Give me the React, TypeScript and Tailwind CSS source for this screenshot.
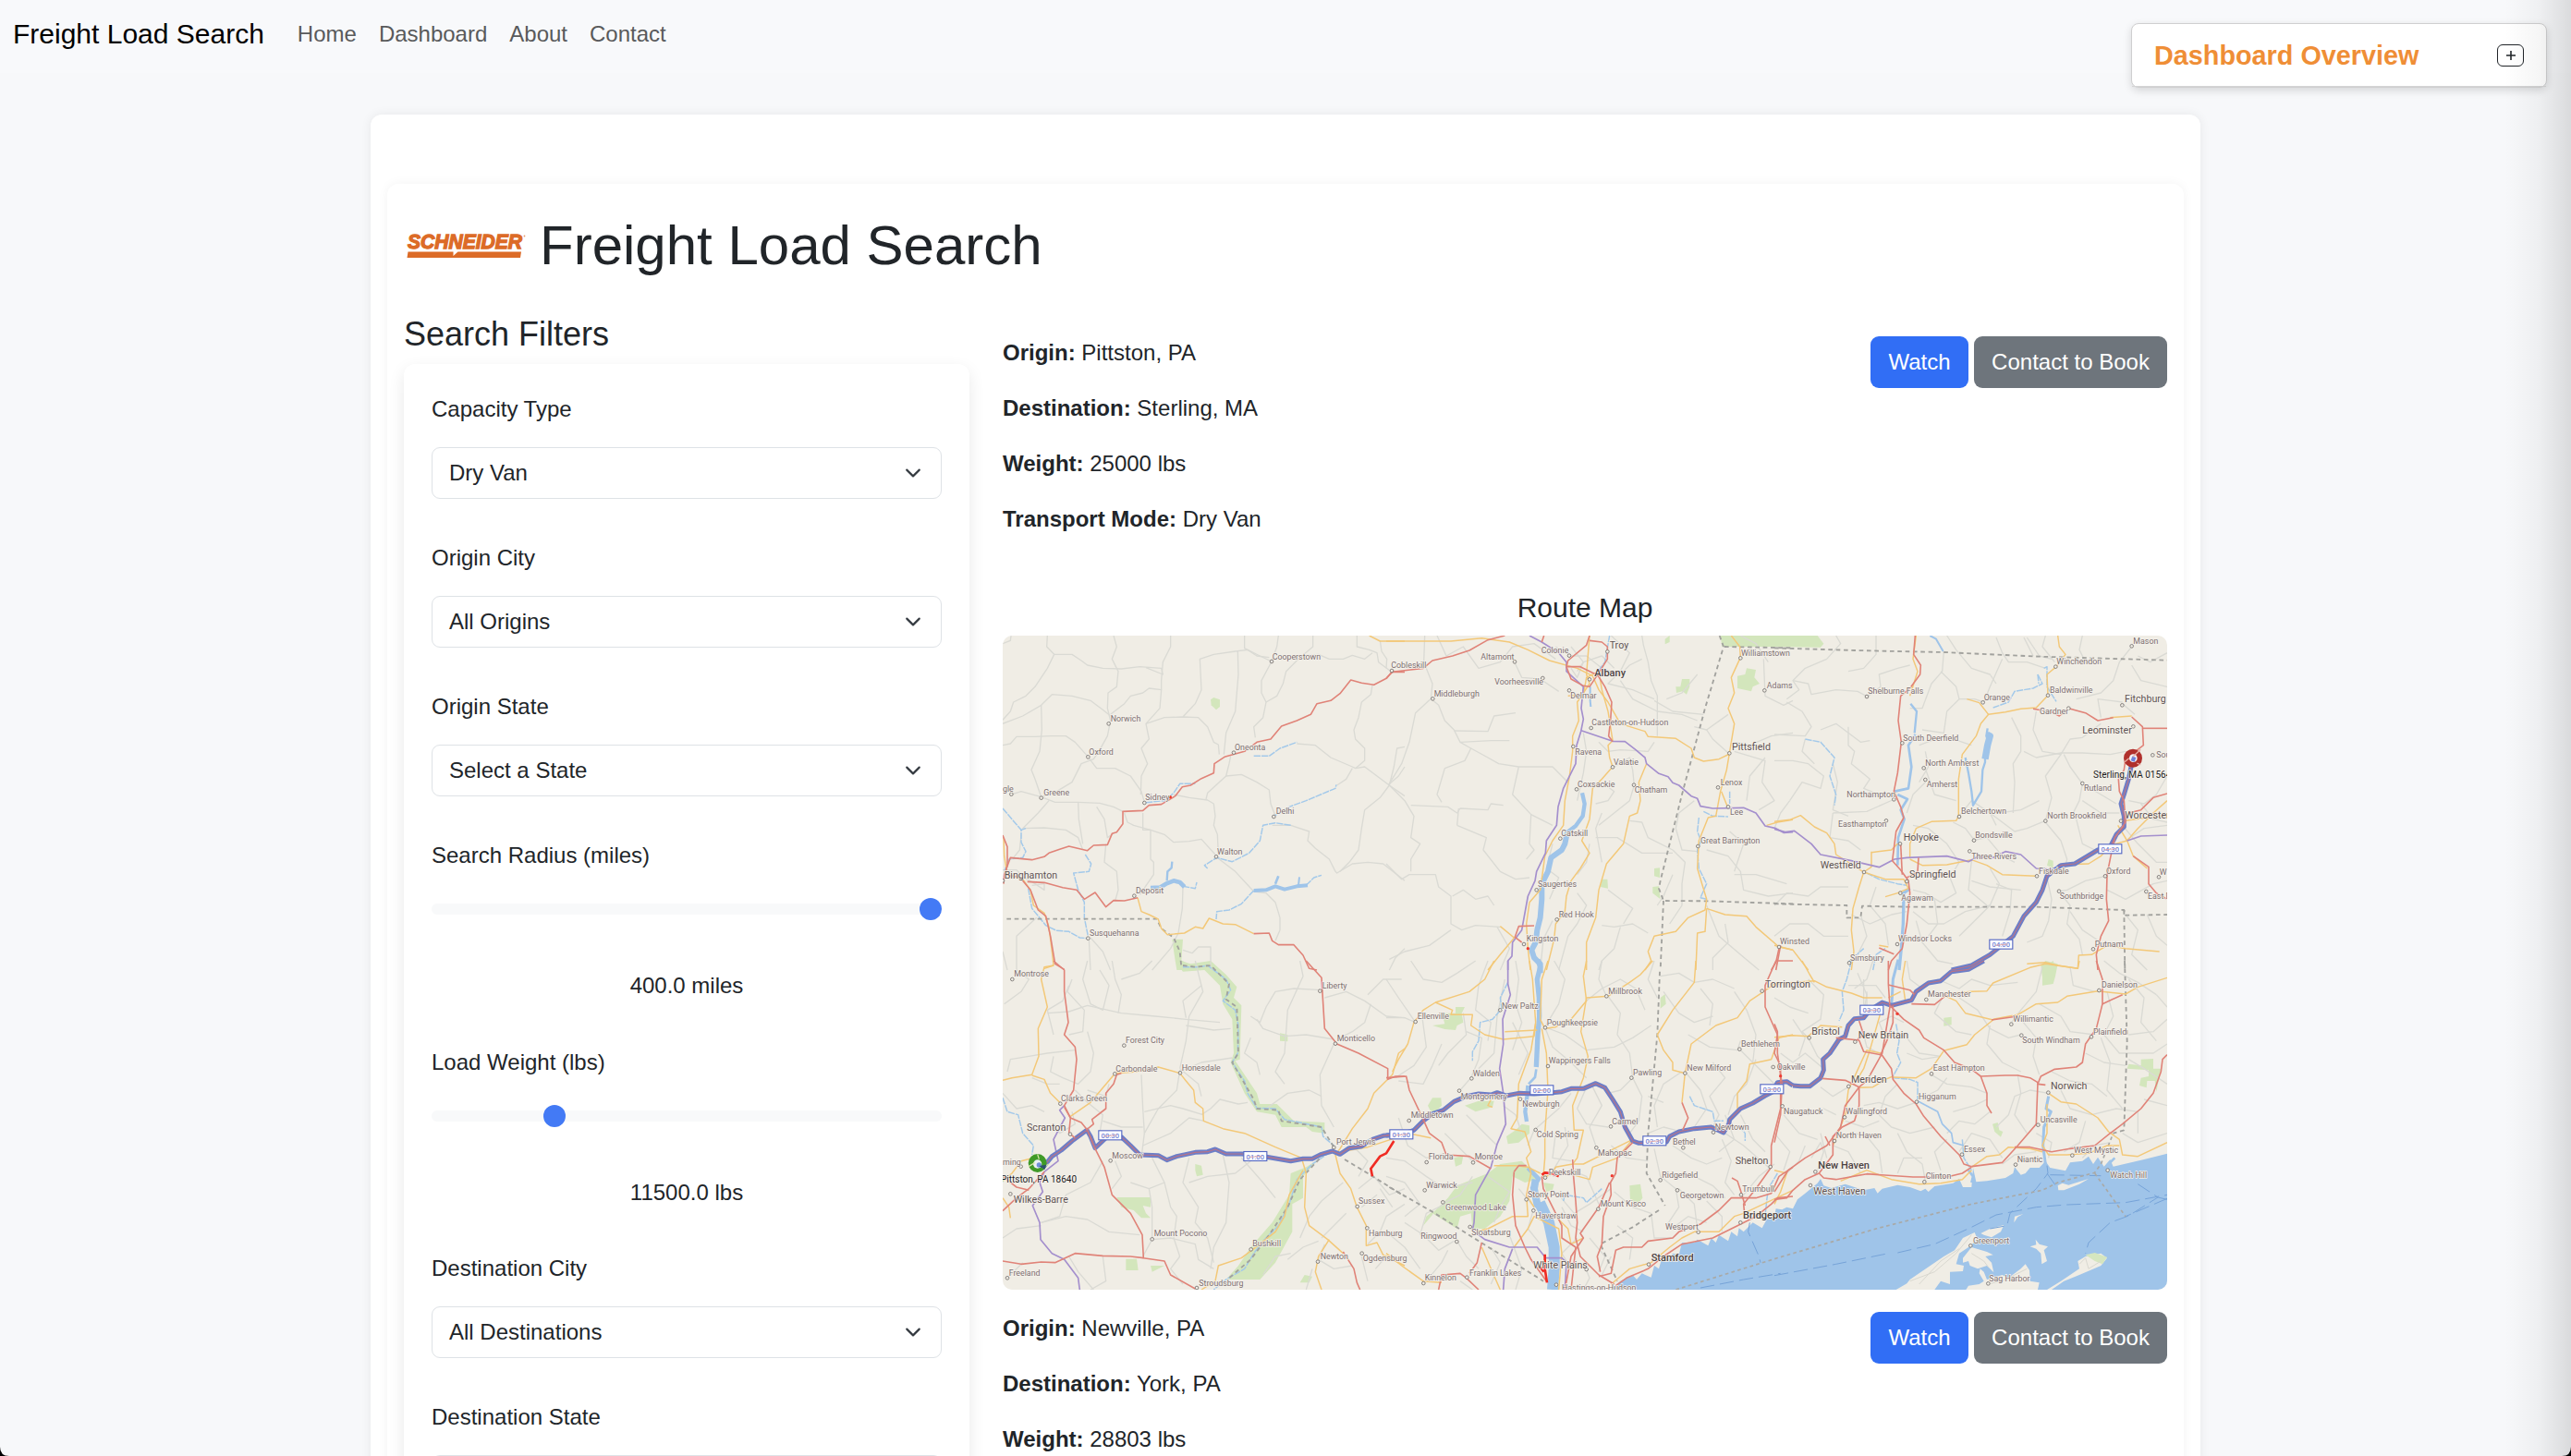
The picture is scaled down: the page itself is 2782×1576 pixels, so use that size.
import React from "react";

type Label = [string, number, number, number, number, number?];
type Tile = {
  x: number;
  y: number;
  minor?: string[];
  yellow?: string[];
  red?: string[];
  purple?: string[];
  stream?: string[];
  river?: [string, number][];
  parks?: string[];
  border?: string[];
  route?: string;
  times?: [string, number, number][];
  jams?: string[];
  labels: Label[];
};

// Map geometry is kept in six sectors; each one has its own local origin.
const tiles: Tile[] = [
  {
    x: -15,
    y: -24,
    minor: [
      "15,50 40,40 42,24", "160,24 158,60 182,85 160,130 120,190 90,220 50,240 40,270 15,298",
      "182,85 240,85 270,105 290,120 340,130 400,132 460,125 530,130 535,150 480,128", "375,24 385,60 370,100 390,140 385,190 357,210 355,260 365,300 355,350 330,395 310,425 270,440 240,500 190,530 140,548",
      "15,310 80,285 140,250 175,215 240,220 300,235 340,265 365,285", "365,280 410,245 430,220 470,210 490,195 530,200 530,170 535,110 560,60 560,24",
      "15,380 40,375 60,352 120,352 170,350 220,350 250,370 290,415 320,455 380,455 430,480 465,530 475,565", "140,250 142,330 135,400 108,460 120,490 140,548 75,530 43,540",
      "140,548 185,565 260,565 330,568 375,580 405,595", "530,200 525,260 480,310 490,360 465,390 485,440 465,480 463,540",
      "480,310 540,290 600,288 650,290 680,320 700,370 715,378 718,410", "600,288 640,245 660,200 655,100 700,85 770,75 810,70 840,90 880,95",
      "800,24 800,65 850,90 888,108 855,170 855,210 870,240 860,290 830,320 835,355", "778,75 780,150 770,270 740,340 733,410",
      "910,24 905,60 888,108", "1022,24 1022,60 975,100 935,140 925,180 905,220 870,240", "975,90 1040,85 1075,100 1120,100 1150,88 1190,100 1215,80",
      "1165,24 1165,60 1205,70 1230,80 1235,110 1275,140", "1240,40 1245,75 1262,100 1260,130", "1215,185 1210,215 1180,240 1170,290 1155,330 1160,360 1190,390 1190,430 1160,455",
      "570,540 620,550 680,558 700,570 705,610 700,640 712,670 715,735", "410,600 420,630 440,640 495,655 540,670 570,695 620,692 660,685 705,735",
      "470,600 470,655 495,655 495,750 505,760 505,800 460,865", "675,555 680,535 740,480 790,475 840,500 880,525 885,570 900,610",
      "740,480 750,440 755,415", "890,640 950,640 1010,660 1005,690 1030,715 1075,750 1095,790 1100,795 1150,765 1200,760 1250,765 1320,820",
      "970,375 1030,380 1080,420 1150,450 1160,455 1190,450 1230,480 1270,510 1240,550 1190,590 1180,650 1170,720 1140,760 1110,790",
      "1150,455 1130,490 1100,510", "1320,385 1295,390 1285,450 1270,510 1320,545", "705,740 770,790 830,855 870,860 900,890 915,940 915,980 900,1015",
      "600,840 598,910 585,990 560,1040 500,1110", "165,560 130,600 80,650 150,648 220,655 260,680 275,720", "75,670 70,720 50,745",
      "260,565 262,620 275,700", "350,700 345,760 385,790 390,850 380,885", "320,580 345,620 355,680 375,665",
      "125,940 60,1000 60,1110", "15,1050 30,1110", "295,1010 300,1110", "300,1005 340,1050 365,1110", "15,785 60,785 85,810 120,830 150,850 150,830 110,835",
      "600,1045 630,1055 650,1035 690,1035 690,1110", "1320,1040 1290,1070 1270,1110",
    ],
    yellow: ["1205,24 1240,42 1320,42", "18,680 20,740 30,800 80,815 105,850 115,900 150,925 165,970 175,1050 180,1095 150,1105", "453,875 465,920 490,930 520,945 530,975 550,995 605,990 640,970 665,975 685,942 730,960 770,962 830,992"],
    red: ["1320,142 1278,142 1262,162 1220,184 1180,178 1145,168 1110,212 1080,235 1035,245 1015,280 970,300 920,318 885,360 840,370 800,400 735,418 702,440 700,470 660,488 625,510 598,515 575,545 530,572 490,575 470,592 405,595 405,635 385,662 370,667 355,703 310,705 290,722 230,708 200,718 165,730 150,742 110,752 40,745 20,800 18,830", "15,672 30,710 30,770 22,800 70,808 105,850 130,915 155,935 170,1000 185,1090 215,1108", "95,823 150,826 210,842 255,850 280,880 315,858 350,905 375,884 410,885 453,875", "830,992 880,990 890,1015 910,1028 960,1028 990,1062 1010,1105 1035,1110"],
    stream: ["15,585 45,620 75,655 75,695 90,725 80,745 35,750 20,790", "75,655 90,650", "98,845 110,910 155,965 190,982 230,985 265,1005 292,1007", "283,735 302,765 295,790 245,795 260,850 280,890 280,940 292,1000", "480,566 540,560 570,535 590,505 640,505", "830,415 880,415 915,390 970,370", "895,610 945,580 1000,560 1095,520 1098,508", "950,640 900,632 860,640 850,690 815,730 760,758 710,745 670,770 680,780", "830,852 790,895 750,915 710,920 708,945", "1000,835 1025,810 1050,802", "600,838 640,845 645,825"],
    river: [["495,843 525,842 545,830 570,820 590,825 605,840", 14], ["548,820 550,790 563,778 565,758", 7], ["830,852 870,850 900,838 930,848 970,838 1005,835", 12], ["900,830 910,805", 8], ["975,835 978,808", 6]],
    parks: ["690,232 700,225 720,232 720,255 708,265 692,250", "565,1010 600,1010 595,1080 640,1095 690,1085 720,1110 580,1110 572,1060"],
    border: ["28,944 515,944 530,975 570,1005 590,1050 595,1100"],
    labels: [["Cooperstown", 890, 101, 888, 108], ["Norwich", 365, 302, 359, 310], ["Oxford", 295, 410, 292, 418], ["Greene", 148, 543, 140, 551], ["gle", 15, 532, 43, 539], ["Sidney", 478, 559, 475, 567], ["Oneonta", 768, 397, 765, 404], ["Delhi", 902, 604, 895, 612], ["Walton", 711, 734, 708, 742], ["Deposit", 447, 861, 442, 869], ["Binghamton", 20, 812, 15, 820, 1], ["Susquehanna", 297, 999, 292, 1007]],
  },
  {
    x: 1245,
    y: -24,
    minor: [
      "125,24 122,110 150,180 145,229 95,275 75,370 50,440 8,508", "8,508 60,560 90,610 80,680 110,700 80,750 80,790", "8,508 40,480 60,450", "80,575 200,580 230,600 240,585 330,590 340,570 380,575",
      "145,229 170,250 190,300 220,330 240,370 275,390 255,430 190,455 165,540 180,565", "220,333 330,335 350,285 420,275", "240,370 340,365 400,365", "275,390 330,420 365,440 430,450 540,450 590,500",
      "415,107 440,160 500,165 560,205", "430,450 410,540 470,605 540,640", "470,605 465,700 480,720 455,750", "230,640 325,680 315,720 370,790 420,815 465,810",
      "230,640 235,585", "0,765 50,815 75,800 160,800 170,840 210,870 210,960 245,980 290,965 370,970", "210,980 140,1030 60,1050 10,1075", "215,870 250,850 290,880 330,870 350,900",
      "165,24 195,90 250,60 300,130 370,110 410,60 480,50 550,100", "550,60 600,90 650,90 700,130 760,150 790,120 830,100", "600,130 620,160 640,110 700,90 740,130", "600,60 640,110 620,140",
      "730,24 790,80 760,140 720,180 800,200 870,230", "830,24 835,55 850,110 860,170 880,220 880,350", "760,170 800,230 880,270 960,280 1010,300", "870,235 930,270 1030,280",
      "1010,150 960,210 910,230", "640,340 650,400 640,470 620,560", "690,370 720,400 760,395 850,400 870,370", "740,450 790,420 800,460 805,510 790,560 740,600 690,640", "700,500 740,530 720,560 680,570",
      "680,680 750,680 830,730 930,730", "700,600 680,650 700,760", "790,625 830,630 850,680 930,720", "930,720 970,760 960,830 960,900 920,960", "930,800 900,870 880,900", "720,850 760,880 800,910 770,960",
      "700,965 740,970 800,960 850,990", "1000,560 950,600 940,650 960,720 1010,725", "1040,720 1110,740 1150,790 1160,850 1240,870 1320,860", "1130,800 1200,800 1300,830", "1115,660 1160,700 1130,790",
      "1130,400 1230,430 1220,500 1260,560 1210,590", "1225,100 1230,220 1290,250 1320,235", "1130,370 1180,380 1250,350 1320,340", "1040,330 1060,360 1110,405", "1110,280 1040,330 1000,320",
      "1170,560 1180,480 1230,420", "1150,24 1200,50 1240,110", "540,700 520,780 560,810 530,880", "660,700 650,760 620,800", "540,950 510,1010 500,1110", "620,860 650,900 620,960 590,1000 560,1110", "760,970 740,1040 700,1080 690,1110", "1040,900 1080,1000 1150,1060 1210,1110", "1100,960 1110,1020 1060,1070 1060,1110", "360,970 400,1040 370,1110",
    ],
    yellow: ["0,42 210,42 310,32 400,45 460,70 530,105 620,130 670,155 690,200 720,240 760,310 840,335 850,352 940,358 990,390 1000,420 1030,432 1080,425 1115,408", "660,24 650,150 660,180 620,240 625,300 605,350 605,400 595,480 580,560 575,640 540,690 515,740 500,850 465,890 455,960 460,1040 468,1110", "590,220 640,215 650,160 690,140 700,200 720,270 735,365 720,380 725,420 735,450 700,490 670,520 660,620 635,690 660,730 630,780 600,820 585,870 580,920 550,960 545,1010 520,1110", "845,440 820,500 825,560 815,600 790,610 770,700 715,765 690,850 680,940 650,1020 650,1110", "1120,24 1148,60 1150,95 1120,160 1130,210 1110,260 1130,310 1115,400 1105,460 1085,530 1070,610 1045,615 1015,690 1010,780 1025,830 1040,880 1035,915 980,940 940,985 870,1000 850,1050 860,1080 840,1110", "1088,530 1110,585", "1040,910 1035,985 1010,990 1005,1110", "1040,910 1100,930 1170,935 1200,970 1275,1035 1320,1045", "1320,622 1270,630 1235,640", "370,968 415,1005", "420,1000 370,1060 330,1110"],
    red: ["0,162 20,142 120,130 150,105 215,90 270,72 330,38 370,28 385,24", "512,24 505,45", "660,24 650,55 590,105 585,125 630,125 670,145 685,150", "660,40 700,45 718,60 718,100 690,145 660,190 640,187 600,165 585,125", "685,150 710,190 732,240 728,300 722,350 735,368", "480,966 430,968 418,1003 440,1020", "1275,1040 1265,1085 1250,1110"],
    purple: ["465,24 505,45 560,80 585,110 585,140 640,190 633,260 640,295 632,335 618,380 615,440 575,520 558,580 553,640 520,690 517,730 488,790 483,820 460,870 440,980 410,1020 408,1065 395,1080 395,1110", "633,332 735,367 775,368 810,395 840,420 845,440 885,472 915,482 930,502 950,510 990,545 1010,553 1020,578 1060,585 1160,583 1200,600 1230,642 1265,650 1290,664 1320,662"],
    stream: ["725,24 710,110 680,150", "1115,530 1115,570", "1030,595 1060,610 1110,612", "1015,615 1010,660 1022,690 1010,720 1015,780 1040,830 1020,875 1040,880"],
    river: [["662,190 662,235 664,255", 6], ["636,535 644,570 638,610 615,642 588,662", 13], ["588,662 580,700 570,720 535,745 525,790 505,830 505,880 500,940 490,980 485,1020 472,1045 480,1070 500,1090 500,1120", 18]],
    parks: ["1085,24 1320,24 1320,60 1090,60", "905,35 920,24 920,45 905,52", "940,190 955,190 960,165 985,165 985,190 975,215 962,205 942,210", "1140,155 1165,150 1170,130 1200,135 1195,160 1212,180 1190,190 1185,205 1140,195", "870,780 888,778 888,810 870,805", "865,840 885,838 890,880 865,860", "700,815 718,815 720,845 695,840"],
    border: ["1082,24 1095,60 1035,260 960,540 890,820 885,845 900,885 1040,886 1320,895", "1098,60 1320,64", "900,885 890,1110"],
    labels: [["Cobleskill", 16, 130, 18, 138], ["Altamont", 307, 101, 417, 109], ["Colonie", 503, 80, 594, 89], ["Troy", 725, 66, 718, 76, 1], ["Albany", 676, 157, 660, 166, 2], ["Voorheesville", 352, 184, 508, 162], ["Delmar", 598, 227, 594, 202], ["Middleburgh", 155, 222, 151, 229], ["Castleton-on-Hudson", 667, 316, 665, 324], ["Ravena", 613, 410, 607, 384], ["Valatie", 738, 443, 735, 451], ["Coxsackie", 621, 515, 618, 523], ["Chatham", 806, 534, 804, 509], ["Catskill", 568, 675, 565, 683], ["Saugerties", 492, 841, 488, 850], ["Red Hook", 560, 938, 554, 946], ["Kingston", 455, 1018, 447, 1026], ["Williamstown", 1152, 89, 1150, 97], ["Adams", 1235, 194, 1228, 202], ["Pittsfield", 1122, 396, 1114, 406, 1], ["Lenox", 1085, 509, 1077, 517], ["Lee", 1116, 607, 1110, 580], ["Great Barrington", 1020, 700, 1012, 708]],
  },
  {
    x: 2505,
    y: -24,
    minor: [
      "200,24 215,50 170,100 100,130 60,170 80,200 40,230", "60,170 110,180 120,215 200,200 270,205 302,222 345,190 340,150 400,130 440,120", "330,24 330,85 290,130 240,140", "40,240 90,270 120,320 100,350 0,345", "150,330 200,310 280,370 310,365", "240,320 240,380 260,400 250,440 310,490 290,520 350,545",
      "0,430 60,430 110,440 160,480 150,520 90,500 50,560", "100,360 90,400 130,440", "50,560 20,600 0,650", "190,440 205,500 190,590 240,610", "190,600 300,595 390,555", "190,600 180,680 240,690 280,720",
      "550,75 545,140 510,180 480,260 440,260", "560,24 590,70 640,130 700,150 720,180", "540,140 590,190 600,230 560,270 550,340 480,330", "470,380 550,350 640,380", "720,30 740,80 760,110 820,110 880,130", "820,30 860,90 900,100", "740,100 700,190 680,240",
      "810,30 840,90", "600,230 650,230 680,240", "850,270 840,330 870,400 930,410 960,360 1000,355 1060,310", "770,290 800,350 800,400 775,440 780,500 775,600", "810,400 850,420 930,405 1000,405 1090,410 1140,400", "930,410 880,480 900,550 880,625", "880,625 820,650 780,660 700,600",
      "730,600 800,590 860,560", "490,455 520,540 590,560", "490,500 450,540 430,600", "450,640 500,650 560,700 600,760", "470,500 500,450 490,400", "650,690 620,650 580,630", "640,690 690,680 740,740 780,760", "600,610 640,560 700,600 720,640",
      "600,760 570,810 590,860 540,890 490,860 450,850", "640,755 630,850 690,900", "700,780 730,830 700,900 650,950 600,1000", "450,920 500,960 550,960 620,920 700,900", "460,950 480,1020 530,1080 580,1090", "720,830 770,850 765,920 740,1000", "885,810 900,880 890,950 870,1000 820,1020",
      "920,850 960,900 950,960 990,1010 1000,1060", "1075,805 1010,820 950,850 920,855", "880,630 930,690 950,750 940,790", "980,620 1000,700 1040,720", "1000,505 1060,540 1110,570", "1000,505 990,560 960,620", "1000,505 960,450 940,410", "1120,600 1060,600 1000,560",
      "1130,640 1180,700 1240,760 1275,760", "1140,690 1200,650 1275,640", "1150,560 1200,570 1240,540 1275,480", "1190,570 1230,620 1275,630", "1080,850 1140,880 1230,830 1275,820", "960,920 1000,980 1060,1020", "1140,930 1180,980 1160,1060 1210,1110", "1210,930 1240,1000 1275,1030", "1160,120 1190,170 1275,190", "1160,60 1120,110 1100,170 1060,210 980,230", "1060,290 1050,230 1130,240", "1130,245 1170,280", "0,900 40,860 110,870 150,840 240,840", "0,1000 50,960 110,960 160,1000 240,1000", "250,930 310,960 380,930 430,920", "280,930 300,1000 260,1080", "330,840 310,900 360,960 370,1030",
      "880,24 870,60 910,110", "1000,24 990,70 1010,110", "1275,80 1220,110 1180,90", "640,820 700,840 800,850", "520,880 530,960 500,1000",
    ],
    yellow: ["920,24 925,60 945,85 915,125 885,150 888,218 850,258 800,262 750,272 695,280 670,310 655,350 610,410 598,490 598,610 590,625 510,628 460,650 440,700 440,745", "625,230 665,242 695,280", "0,628 50,622 85,608 130,645 170,665 195,700 200,735 240,760 290,792", "290,792 275,840 255,910 250,980 258,1050 250,1110", "315,725 315,775 290,792 360,815 420,815 435,845 400,860 360,872", "400,700 380,720 315,728", "440,750 480,770 560,768 640,752 690,770 740,800 850,805", "1090,290 1160,285", "1275,560 1230,600 1180,650 1145,690 1090,705 1060,740 1020,765 920,768", "1140,625 1210,615 1275,608", "1145,690 1165,740 1210,780", "1115,640 1145,690", "0,1030 60,1045 110,1110", "820,1090 880,1085 920,1095 985,1105 988,1062 1030,1060 1080,1030 1140,1040 1250,1050", "460,24 450,100 465,140 440,220", "340,1030 370,1035"],
    red: ["457,24 452,85 475,120 473,150 440,195 410,220 402,300 412,370 400,470 388,530 410,580 420,615 395,660 383,755 410,785 435,820 440,860 430,960 415,1040 380,1080 370,1110", "340,1038 388,1058", "840,262 900,272 925,285 955,260 1010,275 1050,300 1100,290", "1160,288 1195,320 1198,380 1140,425 1135,460 1117,490 1120,530 1135,560 1140,630 1105,680 1092,740 1080,800 1078,880 1085,950 1060,1000 1045,1060 1050,1110", "1195,325 1275,325", "1275,537 1230,550 1190,590 1150,600", "1165,740 1215,775 1215,830 1240,860 1275,880", "430,810 465,790 468,745", "20,1030 5,1110", "410,700 415,800"],
    purple: ["0,652 35,662 65,658 120,700 150,735 250,755 340,776 390,750 430,745 560,740 630,758 660,742 710,745 750,725 800,735 850,780 900,783 930,770", "1145,690 1190,675 1275,672"],
    stream: ["875,130 885,125 885,190 915,238", "855,150 870,180 840,195 780,205 760,240 710,258", "855,150 858,180", "100,360 150,370 195,420 180,480 200,540 195,575", "300,795 340,815 400,830 430,835", "240,1085 290,1040", "320,1110 330,1060 360,1040"],
    river: [["505,24 525,35 548,75", 6], ["442,245 462,270 455,340", 7], ["458,345 435,380 445,450 435,520 390,530", 8], ["400,540 432,555 410,590 422,620 402,680 400,770", 8], ["440,845 420,860 418,960 412,1040 405,1110", 10], ["692,325 688,350 702,350 695,375 684,400 684,435 676,460 672,530 645,575 640,530 630,470 620,420", 7], ["690,345 700,350 692,380 684,425", 22]],
    parks: ["0,24 140,24 160,50 150,62 0,60", "885,770 890,750 905,755 905,780", "890,1090 905,1080 915,1110 890,1110"],
    border: ["0,64 260,72 550,78 860,92 1275,104", "0,895 235,900 235,940 280,940 285,902 440,905 850,905 1135,915 1140,932 1275,930", "1135,915 1138,1110"],
    route: "575,1110 640,1095 700,1060 775,1000 810,935 850,890 870,850 885,805 930,770 975,765 1050,720 1090,710 1110,670 1135,645 1135,610 1125,570 1135,540 1150,490 1163,425",
    times: [["04:30", 1051, 700], ["04:00", 697, 1010]],
    labels: [["Mason", 1165, 51, 1160, 58], ["Winchendon", 916, 117, 913, 125], ["Baldwinville", 894, 211, 888, 218], ["Orange", 680, 233, 677, 241], ["Shelburne Falls", 304, 214, 300, 222], ["Gardner", 861, 279, 955, 260], ["Fitchburg", 1137, 239, 1129, 250, 1], ["Leominster", 1000, 343, 1165, 319, 1], ["South Deerfield", 418, 365, 415, 373], ["Sou", 1240, 420, 1228, 412], ["North Amherst", 490, 446, 485, 454], ["Amherst", 494, 515, 490, 492], ["Northampton", 235, 549, 388, 556], ["Easthampton", 207, 645, 363, 625], ["Rutland", 1005, 529, 1000, 504], ["Belchertown", 606, 604, 600, 612], ["North Brookfield", 886, 618, 880, 626], ["Worcester", 1138, 617, 1125, 626, 1], ["Holyoke", 419, 689, 408, 700, 1], ["Bondsville", 652, 681, 648, 689], ["Three Rivers", 640, 750, 634, 724], ["Westfield", 149, 781, 291, 792, 1], ["Springfield", 438, 811, 430, 822, 1], ["Agawam", 412, 885, 409, 860], ["Fiskdale", 858, 797, 852, 805], ["Oxford", 1077, 797, 1074, 805], ["Southbridge", 926, 878, 924, 854], ["W", 1250, 800, 1248, 808], ["East D", 1212, 880, 1207, 855], ["Winsted", 18, 1027, 15, 1035], ["Windsor Locks", 402, 1018, 399, 1026], ["Simsbury", 246, 1079, 243, 1087], ["Putnam", 1040, 1035, 1035, 1042]],
  },
  {
    x: -15,
    y: 1056,
    minor: [
      "60,30 100,60 75,100 20,140", "290,0 275,60 300,140 340,160 360,80 330,30", "160,170 230,165 290,145 400,170 510,180 610,190 720,200", "240,60 225,100 280,160 275,230 230,240", "370,0 380,60 400,110 390,170", "640,0 665,100 620,180 610,260 590,350", "500,0 460,40 400,60",
      "610,185 600,130 660,80", "610,210 700,225 755,220", "590,350 650,400 660,440", "465,370 470,480 475,560 465,640", "590,355 580,420 520,480 475,560", "475,490 560,470 600,480 665,500", "690,480 720,450 780,465 810,460", "690,480 660,500",
      "590,360 660,330 760,315", "820,250 800,300 840,330 850,370", "820,180 850,200 870,150 900,100 960,90 1050,95", "840,190 860,220 930,245 1000,240 1090,255", "980,0 990,50 940,160 930,300 900,360 930,400", "1060,120 1130,100 1190,130 1260,180 1320,185", "1090,270 1045,370 1050,470 1090,540", "1110,250 1150,230 1190,200 1210,140", "1310,60 1250,60 1200,110",
      "15,430 60,480 110,470 150,490", "30,360 40,320 100,310 160,300 250,290", "110,380 160,400 200,400", "180,310 170,360 210,380 260,400 300,360 310,300 290,230", "250,420 290,460 340,500 330,560", "340,520 400,540 470,540", "290,420 350,440 360,400", "180,530 200,560 250,530 240,490",
      "380,650 400,700 370,740", "340,650 300,720 220,760 200,830 140,850", "490,740 500,800 500,905", "500,640 540,720 560,800 580,830 570,900 590,960", "620,640 600,720 650,800 640,850 680,900 700,980", "730,630 750,720 740,850 700,930 690,1000", "790,640 860,720 900,770", "620,720 680,700 770,690 820,650", "500,905 560,900 640,920 650,970 700,1000",
      "500,905 470,960", "590,960 560,1000 600,1050", "140,850 220,830 290,840 360,880 460,890", "15,900 60,870 140,860", "30,1030 80,980", "230,960 260,1010 310,1068", "340,960 350,1040 300,1068", "1120,720 1050,780 1010,830 980,900", "1130,820 1080,870 1050,900", "1170,740 1220,700 1270,760 1320,740", "1320,790 1260,830 1240,880 1200,920", "1240,740 1280,800", "1180,800 1230,760", "940,970 990,930 1040,910", "1000,1068 1020,1000", "860,1020 900,960 950,950", "1060,920 1040,970 1090,1000 1150,990", "1200,1040 1180,960",
      "230,80 210,130 160,160 180,240", "430,720 490,740 540,720", "470,600 560,560 620,510 670,520", "870,480 940,430 1010,420 1050,440", "1150,600 1200,650 1170,700", "1225,1000 1260,960 1320,970",
    ],
    yellow: ["180,15 150,20 140,60 160,150 130,220 132,310 110,370 45,380 15,388", "110,372 150,385 170,430 200,460", "235,505 300,460 380,365 450,360 520,345 590,365 610,390 635,420 640,460 665,480 667,520 730,545 800,560 900,605 985,640 1000,690 995,800 1010,860 1070,905 1120,950", "1320,285 1300,300 1280,370 1220,430 1200,480 1150,545 1110,610 1095,630 1110,690 1145,740 1165,800 1195,860 1195,925 1230,915 1250,955 1320,990", "1110,620 1200,605 1320,565", "1075,905 1040,960 1030,1010 1050,1068", "660,1068 705,1040 715,990 790,965 830,935 900,880 930,830 945,760 990,680", "115,640 75,650 45,690 15,715", "15,770 35,800 40,835"],
    red: ["180,0 215,30 215,100 228,200 215,240 250,280 255,320 245,420 215,470 235,510 270,525 290,550 315,610 345,670 370,760 430,820 468,890 472,965 540,975 560,1020 640,1065", "288,548 310,530 305,515 350,480 350,430 375,400 385,370 400,365", "215,475 235,510 230,560 250,575", "1000,0 1050,55 1060,220 1100,270 1170,300 1265,350 1265,385 1290,375 1320,375", "15,975 75,985 140,978 185,980 250,950 340,958 430,960 472,965", "15,812 60,770 100,740 150,685", "15,700 60,735 100,745", "1120,945 1155,1000 1165,1045 1175,1068"],
    purple: ["215,470 200,485 217,510 180,580 195,650 150,685 135,720 145,750 112,795 135,850 138,905 175,950 215,970 260,1030 265,1068"],
    stream: ["15,445 30,490 65,500 80,560 115,600 110,630", "600,20 650,20 680,15 740,60 755,95 730,130 770,160 780,210 778,300 760,330 800,390 810,430 840,478 900,480 930,515 980,525 1050,540 1055,570 1090,600", "1080,620 1020,660 970,710 945,790 910,860 860,910 830,950 800,1000 740,1035 700,1068"],
    parks: ["575,0 600,0 610,12 690,0 740,45 775,85 765,120 790,145 785,320 770,325 840,430 850,465 905,465 960,520 1060,525 1060,560 1020,555 1000,540 920,540 900,500 840,490 800,430 755,330 765,300 760,190 730,140 720,80 670,30 600,35", "1040,645 1000,670 950,690 945,760 890,850 820,930 780,990 740,1035 850,1035 900,980 955,880 955,790 990,770 990,700", "385,768 495,768 495,800 470,795 480,820 495,835 465,835 440,810 400,800", "640,660 660,665 665,695 645,700 640,680", "415,968 450,968 455,1005 415,1005", "495,990 540,990 500,1010", "980,1045 995,1020 1020,1025 1010,1045", "915,235 940,240 940,262 915,260"],
    border: ["600,15 640,20 690,15 750,75 740,125 775,150 780,300 760,330 830,450 840,480 910,485 920,520 1050,540 1090,605", "1125,645 1200,690 1320,765", "1060,625 980,710 940,800 880,890 820,970 750,1030"],
    route: "145,672 175,635 205,615 240,585 288,550 300,570 315,608 350,575 370,567 400,572 430,600 460,630 520,632 548,647 580,635 640,622 680,620 705,612 740,627 790,627 830,630 880,638 950,650 990,643 1020,643 1050,628 1085,618 1110,628 1140,608 1180,602 1215,580 1250,568 1320,563",
    times: [["00:30", 325, 550], ["01:00", 796, 618], ["01:30", 1270, 547]],
    jams: ["1285,585 1260,625 1240,635 1210,675 1215,700"],
    labels: [["Montrose", 52, 52, 46, 60], ["Forest City", 414, 268, 409, 275], ["Carbondale", 382, 359, 379, 367], ["Honesdale", 596, 356, 591, 364], ["Clarks Green", 204, 456, 202, 464], ["Scranton", 93, 552, 234, 563, 1], ["Liberty", 1052, 91, 1045, 98], ["Monticello", 1100, 262, 1095, 269], ["Moscow", 370, 641, 365, 649], ["ming", 15, 662, 74, 668], ["Wilkes-Barre", 50, 787, 40, 757, 1], ["Port Jervis", 1098, 596, 1090, 606], ["Sussex", 1170, 790, 1166, 798], ["Hamburg", 1203, 893, 1198, 868], ["Ogdensburg", 1184, 975, 1181, 950], ["Newton", 1046, 970, 1038, 977], ["Mount Pocono", 506, 895, 500, 904], ["Bushkill", 826, 928, 821, 937], ["Stroudsburg", 652, 1055, 645, 1062], ["Freeland", 35, 1022, 30, 1030]],
  },
  {
    x: 1245,
    y: 1056,
    minor: [
      "290,0 230,40 180,70 120,60 80,0", "0,185 60,185 95,200", "0,60 40,120 95,200", "115,170 130,280 90,340 30,380", "180,270 150,340 120,400 40,390", "250,170 260,240 200,300 170,340", "260,230 310,250 300,320 275,380 240,420", "330,0 300,80 290,160 340,200 330,260", "420,0 430,60 420,140 440,200 410,290", "385,60 360,180 350,300 300,350", "410,200 460,300 430,370",
      "545,0 580,60 560,140 515,215 540,280 600,330 650,380", "515,215 580,240 650,290 740,280 800,250 860,210", "720,115 760,170 750,240 790,300 800,380", "650,130 700,90 760,60 810,90 840,160", "700,0 690,60 715,115", "870,0 850,60 880,120", "890,50 950,40 1000,70 1060,60 1130,90", "900,100 950,170 1000,200 1060,180", "1020,90 1060,140 1050,210", "1130,100 1170,160 1200,240 1190,330", "960,360 900,400 870,470 880,540",
      "800,380 760,420 720,430", "650,410 620,480 650,530 720,540", "600,430 560,480 480,550 460,600", "550,560 540,640 600,650", "670,410 700,470 660,540 680,600", "800,380 830,440 820,520 790,560", "900,460 850,440", "1060,330 1100,380 1050,440 1080,500 1060,540", "980,240 1050,280 1140,290 1150,260", "1150,290 1200,340 1260,400", "1200,320 1170,400 1130,440 1110,500", "970,360 1020,420 1040,480 1000,540",
      "40,510 70,600 130,640 190,625", "0,640 60,650 130,700 190,740 280,720", "0,700 60,720 110,790 60,830", "180,790 240,760 280,700", "110,890 130,820 190,790", "60,850 120,890 170,940 220,910", "230,910 260,960 300,1000", "0,880 60,930 110,1000", "130,1040 180,980 200,940", "330,700 400,750 370,800 350,850", "190,560 230,600 280,650", "260,500 320,560 360,600", "340,930 370,980 340,1050", "440,560 420,500 380,470", "430,740 480,800 460,870 500,920",
      "540,700 600,680 650,700 690,790", "560,760 610,820 660,790 730,740", "730,600 780,640 850,650", "870,610 890,700 940,740 950,800 910,860", "740,750 800,800 860,820 870,900 930,900", "750,860 800,900 790,970", "660,900 710,960 690,1010", "640,980 660,1030 640,1068", "700,1020 730,960", "950,740 1000,790 1010,870", "930,600 990,640 1040,660 1090,640", "1000,700 1060,730 1100,770", "1090,580 1120,650 1100,720 1130,760", "1100,560 1160,600 1240,670", "1150,500 1190,580 1230,620", "1160,760 1210,700 1260,660", "940,860 980,830 1040,850", "1100,500 1130,580 1080,620", "600,1000 570,950 620,900", "240,1040 280,1068", "400,890 440,1000 420,1068", "530,700 560,650 590,600 580,540", "1040,780 1090,830 1090,880", "850,560 900,540 940,550", "640,880 600,860 570,800",
    ],
    yellow: ["350,0 320,60 270,100 160,135 120,160 90,200 70,270 40,320 20,360", "160,135 215,160 210,175 280,175 275,210 320,240 380,255 480,245 485,205", "385,230 490,225", "465,0 475,60 485,200 470,290 430,400 425,510 405,545 450,555 470,620 455,640 470,690 455,760 480,800", "525,0 505,60 500,190 515,220 550,215 600,190 650,130 640,50 650,0", "505,220 520,300 525,420 515,560 515,640 510,700", "650,120 632,230 655,310 640,380 605,470 610,550 640,550 620,640 605,660 550,670 540,690 510,705", "650,120 720,115 790,70 825,45 865,0", "1005,0 1000,70 930,160 880,240 900,290 930,330 930,355 970,365", "970,365 990,270 1070,210 1140,185 1180,130 1225,100 1260,75", "1320,240 1275,250 1250,320 1180,335 1170,390 1140,430 1140,480", "970,365 960,460", "800,580 720,620 640,660 605,660", "800,580 750,640 670,670 660,710 605,695", "70,560 145,575", "350,665 420,665 460,670 500,690", "0,950 50,990 120,1040 180,1045", "310,930 340,1000 370,1068", "415,930 460,870 480,830 560,870 570,950 560,1068", "455,760 460,830 410,830 330,870 290,880", "730,1050 790,1000 860,980 920,930 960,900 1000,880 1080,880 1130,830 1160,820 1320,745", "550,830 590,870 600,920 640,900", "340,450 330,470 345,475"],
    red: ["0,380 65,375 75,420 120,515 140,560 180,590 195,630 270,635 340,675", "960,460 980,510 962,550", "1320,0 1265,0 1230,80 1230,150 1270,240 1260,300 1280,340 1280,480 1250,600 1250,670 1200,740 1160,790 1165,840", "800,590 750,640 745,690 728,720 730,760 705,830 700,920 685,960 695,1010", "605,645 608,700 615,780 620,850 615,900 630,960 690,1020 740,1050", "505,700 510,740 540,800 570,860 570,900 615,930 600,1068", "415,685 430,665 455,665", "415,685 410,760 420,860 450,930 470,970 520,1040", "725,720 690,800 630,885 640,900 600,960 580,1068", "170,1068 180,1020 240,1015 260,1030 300,1068", "310,915 295,980 270,1015", "690,1025 730,1015 745,940 770,930 830,930 850,910 930,900 950,880 1020,855 1080,810 1120,770 1200,770 1250,755 1275,700 1320,670", "745,1055 780,1030 850,1000 900,960 960,920 1060,900 1140,860 1200,830 1250,790 1270,770 1320,765", "1122,705 1140,715 1150,745 1165,795"],
    purple: ["395,0 395,75 403,110 378,190 380,270 368,350 380,430 388,530 360,595 340,670 290,760 285,850 280,875 320,905 400,930 490,930 518,965 570,965 585,980 580,1068", "410,935 385,1000 380,1068"],
    stream: ["395,70 370,120 375,155 345,190 305,200 300,260 280,295 280,325", "985,440 1000,470 1060,490 1065,520 1095,520", "1145,535 1165,560 1165,585", "575,780 580,760 640,770 650,785 700,740", "1270,690 1240,740 1235,780 1230,830"],
    river: [["492,-4 500,20 490,60 496,120 497,180 492,240 487,345", 16], ["487,352 483,378 462,400", 8], ["460,405 457,440 451,490 456,522", 13], ["460,672 495,708 472,742", 14], ["485,710 480,740 490,790 520,820", 24], ["498,785 528,850 545,930 545,1000 540,1068", 36]],
    parks: ["150,210 190,205 180,170 225,170 225,150 255,150 245,170 250,200 230,210 225,225 190,222", "135,470 150,445 178,445 180,470 150,500", "255,470 300,455 350,455 345,475 290,490", "390,570 420,550 440,530 465,535 465,560 430,590 395,595", "220,640 250,632 245,660 225,668", "230,730 330,690 370,660 440,650 460,670 490,710 450,720 410,700 400,780 370,830 320,870 280,870 275,820 240,830 230,870 150,820 200,770", "120,860 150,825 155,810 130,830", "890,120 905,108 908,140 890,155", "790,730 825,725 832,770 820,785 792,780", "510,720 545,725 540,745 520,750"],
    border: ["888,35 880,240 850,560 845,690 905,795", "885,810 800,865 695,920 750,1040", "10,735 150,815 300,910 510,1040"],
    route: "0,567 60,560 90,550 120,520 150,497 185,485 220,457 260,440 300,432 340,435 360,428 390,438 430,430 480,432 540,428 570,425 600,415 640,415 680,398 710,412 735,450 760,490 775,540 800,585 820,592 850,592 910,588 920,570 950,555 1000,545 1055,540 1095,558 1112,530 1115,515 1150,480 1190,462 1230,438 1255,425 1270,395 1300,392 1320,405",
    times: [["02:00", 466, 403], ["02:30", 832, 568], ["03:00", 1213, 400]],
    jams: ["505,695 515,688 540,690 560,700", "515,953 515,1000 522,1045", "495,990 512,1010"],
    labels: [["Millbrook", 721, 107, 715, 115], ["New Paltz", 375, 155, 370, 160], ["Ellenville", 101, 190, 95, 198], ["Poughkeepsie", 521, 209, 516, 217], ["Wappingers Falls", 527, 334, 525, 342], ["Walden", 281, 374, 277, 382], ["Montgomery", 242, 449, 237, 422], ["Newburgh", 442, 475, 435, 449], ["Middletown", 80, 510, 74, 519], ["Cold Spring", 488, 574, 485, 549], ["Carmel", 733, 530, 729, 538], ["Mahopac", 687, 632, 682, 607], ["Pawling", 801, 373, 796, 380], ["New Milford", 976, 356, 970, 365], ["Bethlehem", 1152, 278, 1147, 287], ["Newtown", 1067, 549, 1062, 557], ["Bethel", 930, 596, 964, 607], ["Ridgefield", 895, 704, 890, 712], ["Georgetown", 953, 770, 945, 745], ["Shelton", 1133, 661, 1247, 669, 1], ["Florida", 137, 646, 131, 654], ["Monroe", 287, 646, 282, 655], ["Warwick", 130, 738, 125, 745], ["Greenwood Lake", 192, 809, 184, 784], ["Stony Point", 459, 767, 455, 775], ["Haverstraw", 484, 836, 478, 811], ["Peekskill", 527, 695, 516, 704], ["Mount Kisco", 695, 798, 688, 806], ["Trumbull", 1156, 751, 1152, 760], ["Westport", 906, 872, 1013, 881], ["Bridgeport", 1158, 838, 1150, 850, 2], ["Stamford", 860, 976, 852, 986, 2], ["Sloatsburg", 277, 890, 272, 864], ["Ringwood", 112, 904, 229, 912], ["White Plains", 477, 998, 650, 1002, 1], ["Franklin Lakes", 270, 1022, 262, 1028], ["Kinnelon", 125, 1039, 121, 1047], ["Hastings-on-Hudson", 570, 1070, 552, 1052]],
  },
  {
    x: 2505,
    y: 1056,
    minor: [
      "110,60 160,110 150,190 90,230 110,250", "0,120 50,150 110,170", "270,40 300,110 290,170", "320,0 300,60 260,90", "430,0 440,60 480,90 530,60", "530,60 600,90 640,60 700,80 790,70", "550,110 520,170 590,230 640,240", "600,120 660,160 700,220 760,250 800,240", "700,210 690,270 740,330 800,360", "800,190 850,250 840,310 860,370", "870,20 850,100 800,160 770,200", "860,140 930,180 960,230 1040,240",
      "960,20 970,80 1040,100", "1070,0 1120,40 1180,70 1240,110", "1080,100 1100,180 1070,240 1120,300 1230,300 1275,270", "1150,60 1200,120 1190,200 1240,260", "1150,240 1230,230 1275,190", "1060,250 1090,330 1080,420 1130,480", "1010,300 1070,330 1140,340", "900,360 960,390 1030,400 1080,440", "930,420 960,480 1030,500 1110,480 1180,490", "890,430 830,420 780,440 760,500 720,540", "790,370 800,430 780,500 820,560",
      "510,370 560,400 640,410 690,430", "540,310 480,320 430,300", "460,460 400,480 340,460 290,470", "470,450 530,420 560,380", "580,490 650,470 690,450", "600,620 640,560 700,580 740,640", "560,560 600,520 650,530 700,490", "520,540 440,560 380,540 340,500", "490,715 480,660 430,620 400,560", "350,690 340,620 300,570 260,560", "400,690 420,640 480,640", "540,680 520,620 560,580", "230,520 290,540 340,520", "190,600 240,620 280,690",
      "60,480 110,500 160,480 200,500", "30,500 80,560 140,580", "160,350 100,300 60,330 20,300", "240,410 190,440 150,410", "60,190 100,250 80,310", "110,250 140,310 160,330", "400,400 360,440 340,500", "430,250 470,300 540,310", "360,250 340,200 380,180 420,200", "290,240 300,280 340,300", "290,60 290,140 300,150 300,100", "240,80 330,80 360,120", "100,600 80,650 30,700", "120,640 150,590 160,620 140,680", "150,560 170,640", "0,560 50,620 30,680", "890,640 900,590 850,560", "940,620 990,590 1010,520", "1000,640 1040,600 1090,590", "1130,560 1180,590 1275,560", "1180,490 1180,560", "740,660 780,630 850,620",
      "1150,320 1200,350 1275,400", "1200,450 1275,470", "1240,110 1275,150", "440,1040 480,1020 530,1000 590,960 630,900 680,870", "460,1060 520,1010 580,985", "990,980 1010,960 1020,1000 1060,970",
    ],
    yellow: ["0,75 130,65 170,85 250,105 290,120 350,120", "90,0 115,45 130,70", "0,248 60,242 110,245 150,210 220,215", "550,108 640,100 690,98 710,72 830,22 880,10 985,25 990,0", "550,112 590,130 620,170 710,192 650,240 625,272 550,292 510,350 460,380 385,378", "710,190 790,175 850,140 920,135 950,115 1050,98 1140,108 1180,85 1275,55", "275,412 320,410 360,385 385,375", "345,300 300,290 240,420 230,500 190,600", "260,400 290,350 310,290 350,150", "890,430 930,458 980,465 1050,510 1085,555 1120,580 1130,630 1180,635 1275,590", "885,465 885,560 870,600 890,630 950,630 1020,625 1080,600 1120,600", "640,670 690,635 730,630 760,605 830,610 870,620", "215,715 300,680 380,710 470,725 540,722 610,710 640,680", "0,680 40,690 20,750 0,790", "425,0 415,60 425,130", "370,120 410,100"],
    red: ["370,0 370,75 375,150 350,300 300,390 275,410 230,470 215,540 170,600 100,640 45,680 0,750", "370,78 440,95 455,110", "375,145 420,190 470,225 485,250 550,290 585,330 640,352 670,375 750,372 790,372 830,380 855,395 850,530 790,600 740,655 640,668", "670,375 690,430 690,470 705,495", "345,300 380,350 385,385 420,430 460,465 485,505 540,570 600,630 615,660 640,668", "155,382 230,388 275,410 275,470 260,520 220,540 190,570 190,630 145,690 100,710 60,745 40,770 0,775", "640,670 610,690 560,702 450,702 300,692 200,710 160,705 145,690", "445,140 520,142 560,110", "705,192 790,180", "780,605 830,605 900,620 960,610 1040,600 1090,560 1130,530 1190,480 1230,430 1255,360 1260,320 1275,305", "1045,0 1065,60 1065,140 1130,110", "1065,140 1045,220 1010,270 1000,330 980,345 910,352 865,375 855,400 880,403", "200,250 275,258 290,295 345,305", "0,205 10,230 10,300 20,370 25,400 20,500 0,590", "385,145 385,200 365,260 345,305", "275,195 290,240 270,255", "165,570 180,600"],
    stream: ["250,0 235,60 220,100 225,160 210,195", "395,205 405,260 398,300 410,330 385,375", "385,380 440,385 465,395 465,450", "610,580 615,640 640,680"],
    river: [["402,-4 385,60 382,120 380,140", 9], ["465,455 530,490 545,530 575,560 580,590 615,600", 5], ["890,440 882,480 898,490 875,540 872,600 880,660", 9], ["1105,640 1080,665", 8], ["630,680 645,700 640,720", 8]],
    parks: ["865,15 880,0 920,10 912,50 905,75 870,80 870,55", "550,185 575,182 575,208 550,212", "708,530 725,525 730,550 742,555 735,572 715,555", "1190,320 1230,318 1230,350 1255,350 1240,425 1235,390 1210,390 1208,412 1185,405 1190,380 1215,375 1215,355 1145,350 1150,335 1190,340"],
    border: ["1137,0 1145,260 1135,550 1100,560"],
    times: [["03:30", 277, 143]],
    route: "60,405 85,407 115,407 150,380 160,355 158,320 180,300 210,255 230,245 240,210 260,188 290,185 310,160 350,135 380,145 445,128 460,100 500,72 540,65 575,35 630,28 680,0",
    labels: [["Torrington", -30, 88, -40, 98, 1], ["Manchester", 498, 118, 493, 126], ["Danielson", 1062, 88, 1054, 96], ["Willimantic", 775, 198, 769, 206], ["Plainfield", 1035, 239, 1029, 247], ["South Windham", 805, 267, 802, 242], ["Bristol", 121, 239, 113, 250, 1], ["New Britain", 272, 253, 262, 263, 1], ["Oakville", 8, 353, -4, 345], ["Meriden", 249, 397, 241, 408, 1], ["East Hampton", 515, 358, 510, 367], ["Norwich", 897, 417, 889, 428, 1], ["Higganum", 468, 450, 462, 458], ["Naugatuck", 30, 497, 26, 472], ["Wallingford", 232, 499, 228, 508], ["Uncasville", 863, 525, 856, 533], ["North Haven", 200, 577, 195, 585], ["Essex", 615, 622, 609, 629], ["West Mystic", 972, 624, 967, 632], ["Niantic", 788, 654, 783, 662], ["New Haven", 142, 674, 133, 685, 2], ["Clinton", 491, 709, 487, 718], ["Watch Hill", 1090, 705, 1082, 680], ["West Haven", 127, 760, 117, 729, 1], ["Greenport", 645, 917, 637, 925], ["Sag Harbor", 697, 1041, 694, 1048]],
  },
];

const sound =
  "-532,1068 -500,1040 -460,1020 -447,1035 -430,1015 -400,1028 -390,990 -375,1000 -365,965 -345,975 -330,950 -310,955 -300,915 -260,915 -250,905 -215,925 -205,900 -190,915 -180,890 -150,910 -140,880 -120,895 -115,868 -100,880 -70,850 -40,868 -25,840 0,830 5,805 25,808 40,800 60,805 75,775 100,755 140,722 150,708 160,730 185,738 230,725 290,745 325,738 335,755 350,740 400,728 440,735 475,748 490,740 500,750 520,732 580,722 600,708 612,735 640,735 645,672 655,718 690,715 750,705 775,690 780,670 800,695 815,690 830,672 860,672 880,650 895,672 945,682 960,655 1000,650 1020,635 1035,660 1050,638 1070,668 1090,645 1100,668 1200,645 1275,626 1280,1068";

const islands = [
  "395,1068 430,1048 440,1035 550,960 585,940 612,900 650,882 660,905 630,930 600,950 590,985 615,990 612,1008 570,1010 570,1050 540,1040 520,1068",
  "670,885 700,870 745,858 735,880 705,898 680,890",
  "612,965 640,930 690,945 710,955 685,960 705,980 712,1012 690,990 660,1000 635,990 630,975 612,980",
  "622,1068 630,1055 665,1050 680,1040 665,1015 668,1000 680,1010 690,1035 740,1020 760,1030 800,1000 815,985 828,1005 830,1040 860,1045 855,1068",
  "885,1068 930,1040 990,1000 985,975 1010,960 1060,950 1080,965 1060,990 990,1020 940,1040 900,1068",
  "830,928 850,922 848,905 860,920 888,928 875,940 885,975 868,985 865,950 850,935",
  "922,745 920,730 935,722 955,728 1020,708 990,725 940,745",
  "778,850 780,830 808,822 790,832",
];

const ferries = [
  "0,1022 200,985 370,950",
  "400,948 520,920 640,865 720,825 850,800 950,792 1140,785 1275,760",
  "885,665 888,690 850,740 765,820 755,860 700,870",
  "885,690 920,740",
  "895,695 1060,698",
  "1180,725 1245,768 1150,828 1090,850 1020,915 1010,950",
  "1245,768 1275,775",
  "1275,772 1140,830",
];

function Layer({ pick, stroke, width, dash }: { pick: (t: Tile) => string[] | undefined; stroke: string; width: number; dash?: string }) {
  return (
    <g fill="none" stroke={stroke} strokeWidth={width} strokeDasharray={dash} strokeLinejoin="round">
      {tiles.map((t, i) => (
        <g key={i} transform={`translate(${t.x} ${t.y})`}>
          {pick(t)?.map((p, j) => <polyline key={j} points={p} />)}
        </g>
      ))}
    </g>
  );
}

function RouteMap() {
  const sizes = [26.5, 32, 33];
  const fills = ["#7d6f70", "#5e5252", "#4c4242"];
  return (
    <svg viewBox="0 0 3780 2124" className="block h-[708px] w-[1260px] rounded-[10px] bg-[#f0ede5]" fontFamily="Roboto, sans-serif">
      {tiles.map((t, i) => (
        <g key={i} transform={`translate(${t.x} ${t.y})`} fill="#d3e6bc">
          {t.parks?.map((p, j) => <polygon key={j} points={p} />)}
        </g>
      ))}
      <Layer pick={(t) => t.minor} stroke="#dadad4" width={4} />
      <Layer pick={(t) => t.stream} stroke="#a3c9ea" width={4.4} dash="22 3" />
      {tiles.map((t, i) => (
        <g key={i} transform={`translate(${t.x} ${t.y})`} fill="none" stroke="#9fc4e9" strokeLinejoin="round">
          {t.river?.map((r, j) => <polyline key={j} points={r[0]} strokeWidth={r[1]} />)}
        </g>
      ))}
      <g transform="translate(2505 1056)">
        <polygon points={sound} fill="#9fc4e9" />
        {islands.map((p, i) => <polygon key={i} points={p} fill="#f0ede5" />)}
        <polygon points="1010,955 1040,948 1080,962 1065,985 1040,975" fill="#d5e6bf" />
        <g fill="none" stroke="#d9d8d0" strokeWidth="3">
          <path d="M440 1040L520 1010L590 950L640 890M470 1050L540 975L600 935M990 985L1010 965L1020 1000L1060 975M690 1050L740 1040L800 1010L820 1000M640 950L680 975L695 995" />
        </g>
        <g fill="none" stroke="#76a3d8" strokeWidth="3" strokeDasharray="46 18">
          {ferries.map((p, i) => <polyline key={i} points={p} />)}
          <polyline points="-80,850 -85,880 -50,960 -45,980" />
          <polyline points="-240,1062 -100,1035 20,1015" />
        </g>
        <g fill="none" stroke="#a9a9a6" strokeWidth="5" strokeDasharray="11 10">
          <polyline points="-320,1068 0,968 330,870 640,790 870,745 920,720 1040,688 1060,660 1100,560" />
          <polyline points="1040,690 1140,830" />
        </g>
      </g>
      <Layer pick={(t) => t.border} stroke="#a2a29e" width={5.5} dash="14 11" />
      <Layer pick={(t) => t.yellow} stroke="#f3c878" width={4.4} />
      <Layer pick={(t) => t.purple} stroke="#a48fcd" width={5} />
      <Layer pick={(t) => (t.route ? [t.route] : [])} stroke="#6c7ec8" width={15} />
      <Layer pick={(t) => t.red} stroke="#e08378" width={4.8} />
      <Layer pick={(t) => (t.route ? [t.route] : [])} stroke="#b87488" width={3.4} />
      <Layer pick={(t) => t.jams} stroke="#f02c24" width={8} />
      {[[544, 524], [1705, 1016], [2525, 1430], [2904, 1228], [1978, 1754]].map(([x, y]) => (
        <circle key={x} cx={x} cy={y} r="5" fill="#ee3a30" />
      ))}
      {tiles.map((t, i) => (
        <g key={i} transform={`translate(${t.x} ${t.y})`}>
          {t.labels.map(([name, x, y, dx, dy, s = 0], j) => (
            <g key={j}>
              <circle cx={dx} cy={dy} r={5.5} fill="#f0ede5" stroke="#777370" strokeWidth="2.6" />
              <text x={x} y={y} fontSize={sizes[s]} fontWeight={s === 2 ? 500 : 400} fill={fills[s]} stroke="#f5f2ec" strokeWidth="4" paintOrder="stroke">
                {name}
              </text>
            </g>
          ))}
          {t.times?.map(([v, x, y], j) => (
            <g key={j}>
              <rect x={x + 1.5} y={y + 1.5} width="75" height="30" fill="#fff" stroke="#5468c4" strokeWidth="3.4" />
              <text x={x + 39} y={y + 26} fontSize="23" fontWeight="500" textAnchor="middle" fill="#7486d8">{v}</text>
              <line x1={x + 18} y1={y + 20} x2={x + 60} y2={y + 16} stroke="#e0a0a0" strokeWidth="2.5" />
            </g>
          ))}
        </g>
      ))}
      <g>
        <circle cx="113" cy="1713" r="30" fill="#3f9a28" />
        <circle cx="113" cy="1716" r="14" fill="#e9f0f5" />
        <circle cx="118" cy="1719" r="8" fill="#6f8fd8" />
        <path d="M84 1724L104 1712M113 1684L118 1700M128 1728L150 1716" stroke="#d5e6a8" strokeWidth="4" />
        <path d="M118 1722L142 1718L136 1734Z" fill="#2d4f70" />
        <text x="-6" y="1777" fontSize="30" fill="#1c1c1c" stroke="#f5f2ec" strokeWidth="4" paintOrder="stroke">Pittston, PA 18640</text>
        <circle cx="3669" cy="398" r="30" fill="#b0302c" />
        <circle cx="3670" cy="398" r="13" fill="#f2f4fa" />
        <path d="M3668 408L3673 394" stroke="#6f82d8" strokeWidth="13" />
        <path d="M3642 410L3656 398M3668 394L3694 370M3682 414L3694 420" stroke="#e8b0a4" strokeWidth="4" />
        <text x="3540" y="462" fontSize="30" fill="#1c1c1c" stroke="#f5f2ec" strokeWidth="4" paintOrder="stroke">Sterling, MA 01564</text>
      </g>
    </svg>
  );
}

function Logo() {
  return (
    <svg viewBox="0 0 132 30" className="h-[30px] w-[132px]">
      <text x="4" y="18" fontFamily="Liberation Sans, sans-serif" fontSize="21.5" fontWeight="700" fontStyle="italic" fill="#dc6b27" stroke="#dc6b27" strokeWidth="1.3" textLength="124" lengthAdjust="spacingAndGlyphs">
        SCHNEIDER
      </text>
      <path d="M4.5 21.5H53.5V26L58.5 21.5H127L126 28H3.5Z" fill="#dc6b27" />
      <circle cx="130.5" cy="4.5" r="0.9" fill="#e89a6c" />
    </svg>
  );
}

function Select({ label, value }: { label: string; value: string }) {
  return (
    <div className="h-[161px]">
      <label className="mb-[23px] block">{label}</label>
      <div className="flex h-14 items-center justify-between rounded-[9px] border-[1.5px] border-[#dee2e6] bg-white pr-[21px] pl-[18px]">
        <span>{value}</span>
        <svg viewBox="0 0 16 16" className="h-[18px] w-[18px]">
          <path d="M2 5l6 6 6-6" fill="none" stroke="#343a40" strokeWidth="1.9" strokeLinecap="round" strokeLinejoin="round" />
        </svg>
      </div>
    </div>
  );
}

function Range({ label, value, percent }: { label: string; value: string; percent: number }) {
  return (
    <div>
      <label className="block">{label}</label>
      <div className="mt-[22px] flex h-9 items-center">
        <div className="h-3 w-full rounded-full bg-[#f8f9fa]">
          <div className="relative -top-1.5 h-6 w-[calc(100%-24px)]">
            <span className="absolute h-6 w-6 rounded-full bg-[#437af5]" style={{ left: `${percent}%` }} />
          </div>
        </div>
      </div>
      <p className="mt-[47px] text-center">{value}</p>
    </div>
  );
}

function Load({ rows }: { rows: [string, string][] }) {
  return (
    <div className="flex items-start justify-between">
      <div className="flex flex-col gap-6">
        {rows.map(([k, v]) => (
          <p key={k}>
            <strong>{k}:</strong> {v}
          </p>
        ))}
      </div>
      <div className="flex gap-1.5 text-white">
        <button className="h-14 w-[106px] rounded-[9px] bg-[#316ef5]">Watch</button>
        <button className="h-14 w-[209px] rounded-[9px] bg-[#6e757c]">Contact to Book</button>
      </div>
    </div>
  );
}

export default function App() {
  return (
    <div className="relative h-[1576px] w-[2782px] overflow-hidden bg-[#f7f8fa] font-['Liberation_Sans',Arial,sans-serif] text-[24px] leading-9 text-[#212529]">
      <nav className="flex h-[79px] items-center bg-[#f8f9fb] pb-1.5 pl-[14px]">
        <span className="text-[30px] text-black">Freight Load Search</span>
        <div className="ml-9 flex gap-6 text-[#595a5b]">
          <a>Home</a>
          <a>Dashboard</a>
          <a>About</a>
          <a>Contact</a>
        </div>
      </nav>

      <main className="mx-auto mt-[45px] w-[1980px] rounded-xl bg-white px-[18px] pt-[75px] shadow-[0_0_12px_rgba(0,0,0,0.07)]">
        <section className="h-[1500px] rounded-xl bg-white px-[18px] pt-[31px] shadow-[0_0_12px_rgba(0,0,0,0.05)]">
          <header className="flex h-[72px] items-center">
            <Logo />
            <h1 className="ml-[15px] text-[60px] leading-[72px]">Freight Load Search</h1>
          </header>
          <div className="mt-[38px] flex gap-9">
            <aside className="w-[612px]">
              <h4 className="mb-[10px] text-[36px] leading-[44px]">Search Filters</h4>
              <div className="h-[1300px] rounded-xl bg-white px-[30px] pt-[31px] shadow-[0_6px_18px_rgba(0,0,0,0.09)]">
                <Select label="Capacity Type" value="Dry Van" />
                <Select label="Origin City" value="All Origins" />
                <Select label="Origin State" value="Select a State" />
                <div className="mb-[46px] flex flex-col gap-[47px]">
                  <Range label="Search Radius (miles)" value="400.0 miles" percent={100} />
                  <Range label="Load Weight (lbs)" value="11500.0 lbs" percent={23} />
                </div>
                <Select label="Destination City" value="All Destinations" />
                <Select label="Destination State" value="Select a State" />
              </div>
            </aside>
            <div className="w-[1260px] pt-6">
              <Load rows={[["Origin", "Pittston, PA"], ["Destination", "Sterling, MA"], ["Weight", "25000 lbs"], ["Transport Mode", "Dry Van"]]} />
              <h5 className="mt-[60px] mb-3 text-center text-[30px] leading-9">Route Map</h5>
              <RouteMap />
              <div className="mt-6">
                <Load rows={[["Origin", "Newville, PA"], ["Destination", "York, PA"], ["Weight", "28803 lbs"], ["Transport Mode", "Dry Van"]]} />
              </div>
            </div>
          </div>
        </section>
      </main>

      <div className="absolute top-[25px] right-[26px] h-[70px] w-[450px] rounded-lg border-[1.5px] border-[#cfcfd0] bg-white shadow-[0_3px_10px_rgba(0,0,0,0.14)]">
        <div className="flex h-[68px] items-center justify-between border-b border-[#d4d4d5] pr-6 pl-6">
          <span className="text-[28.8px] font-bold text-[#ef8e36]">Dashboard Overview</span>
          <button className="flex h-[24px] w-[29px] items-center justify-center rounded-md border-[1.5px] border-[#212529]">
            <svg viewBox="0 0 10 10" className="h-[10px] w-[10px]">
              <path d="M5 0v10M0 5h10" stroke="#212529" strokeWidth="1.6" />
            </svg>
          </button>
        </div>
      </div>
      <div className="pointer-events-none absolute inset-y-0 right-0 w-[72px] bg-linear-to-r from-transparent via-black/[0.035] to-black/[0.12]" />
      <svg viewBox="0 0 10 10" className="absolute bottom-0 left-0 h-[10px] w-[10px]">
        <path d="M0 0Q0 10 10 10H0Z" fill="#000" />
      </svg>
      <svg viewBox="0 0 10 10" className="absolute right-0 bottom-0 h-[10px] w-[10px]">
        <path d="M10 0Q10 10 0 10H10Z" fill="#000" />
      </svg>
    </div>
  );
}
